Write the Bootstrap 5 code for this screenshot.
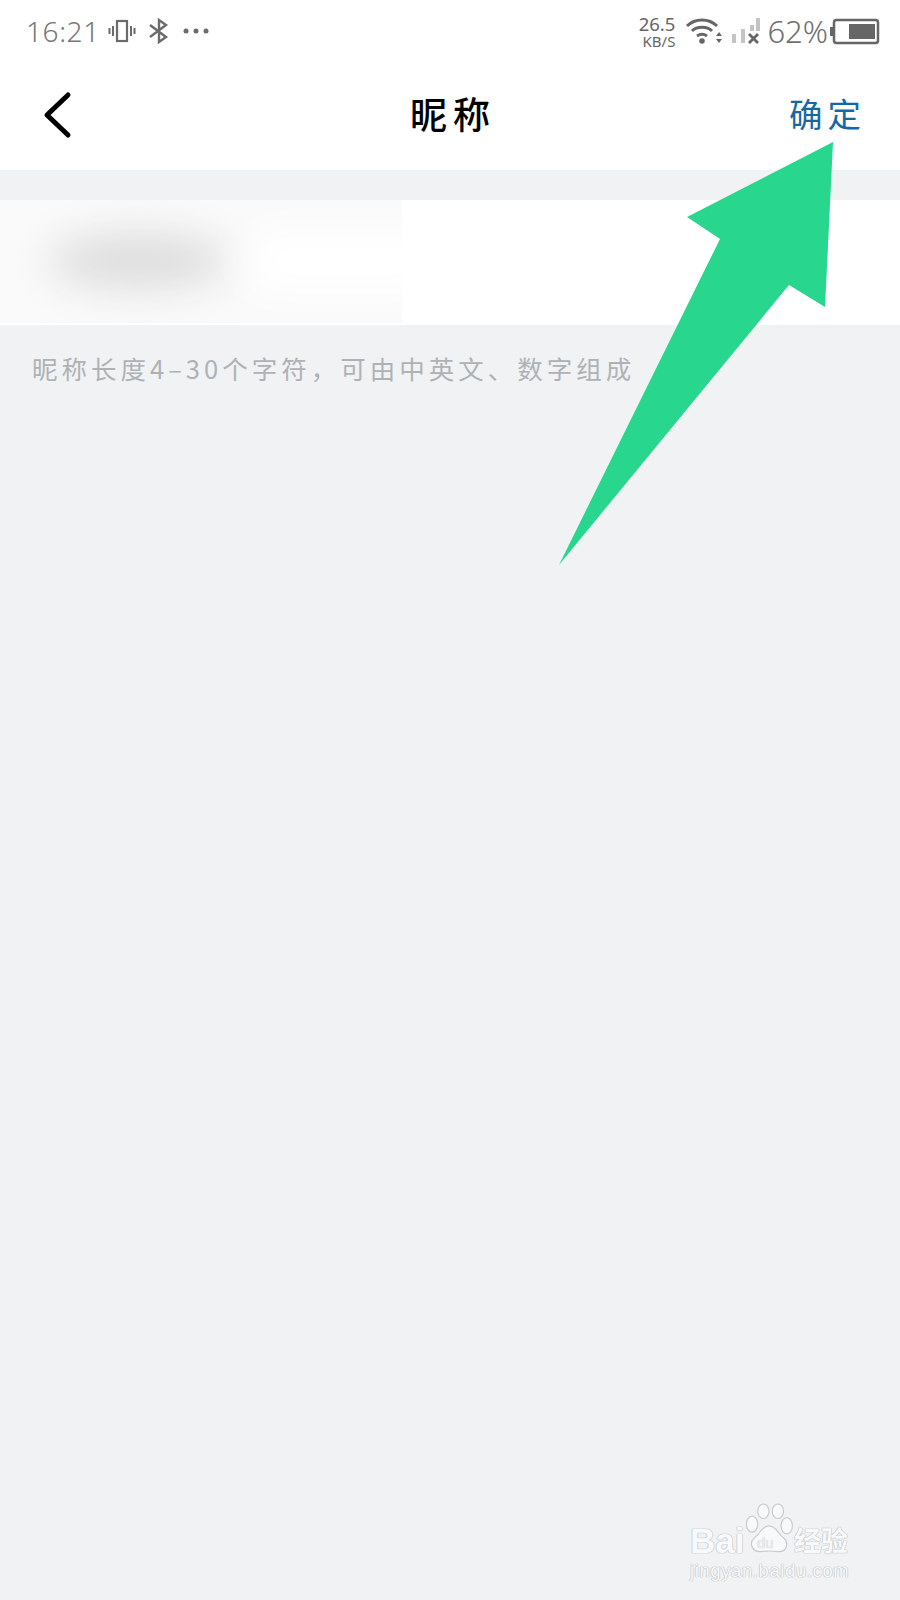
<!DOCTYPE html>
<html lang="zh">
<head>
  <meta charset="UTF-8">
  <title>昵称</title>
  <link href="https://cdn.jsdelivr.net/npm/bootstrap@5.3.0/dist/css/bootstrap.min.css" rel="stylesheet">
  <style>
    body { background: #f0f2f4; font-family: "Liberation Sans", "Noto Sans CJK SC", sans-serif; width: 900px; height: 1600px; overflow: hidden; position: relative; }
    .top-area { background: #fff; height: 170px; }
    .status-row { height: 62px; padding: 0 20px 0 26px; color: #6b6b6b; }
    .status-time { font-family: "Noto Sans", sans-serif; font-size: 28px; font-weight: 300; letter-spacing: .6px; color: #777; line-height: 1; }
    .net-speed { font-family: "Noto Sans", sans-serif; text-align: right; color: #666; margin-right: 6px; }
    .net-speed span { display: block; }
    .speed-num { font-size: 18.5px; line-height: 20px; }
    .speed-unit { font-size: 15px; line-height: 15px; }
    .batt-pct { font-family: "Noto Sans", sans-serif; font-size: 31px; font-weight: 300; color: #6f6f6f; line-height: 1; margin: 0 2px 0 6px; }
    .title-row { height: 108px; padding: 0 34px 0 43px; margin-top: -3px; }
    .back-ico { margin-top: 3px; }
    .page-title { position: absolute; left: 6px; right: 0; top: 90px; text-align: center; font-family: "Noto Sans CJK SC", serif; font-size: 37px; font-weight: 500; letter-spacing: 6px; color: #000; line-height: 46px; }
    .confirm-btn { font-family: "Noto Sans CJK SC", serif; font-size: 33.500px; letter-spacing: 5px; color: #1668a4; line-height: 46px; margin-top: -1px; }
    .name-row { background: #fff; height: 125px; margin-top: 30px; overflow: hidden; }
    .blur-box { width: 402px; height: 123px; background: #fafafa; overflow: hidden; position: relative; }
    .blur-box::before { content: ""; position: absolute; left: 48px; top: 34px; width: 180px; height: 54px; border-radius: 50%; background: #dcdcdc; filter: blur(20px); }
    .blur-box::after { content: ""; position: absolute; left: 250px; top: 28px; width: 190px; height: 66px; background: #fff; filter: blur(20px); }
    .hint-text { font-family: "Noto Sans CJK SC", serif; padding: 23px 0 0 32px; font-size: 25.5px; letter-spacing: 4px; color: #aeb2b6; line-height: 40px; white-space: nowrap; }
    .arrow-mark { position: absolute; left: 0; top: 0; }
    .wm { position: absolute; left: 688px; top: 1500px; width: 190px; height: 90px; color: #f8f9fa; text-shadow: 0 0 1px #b9bdc1, 0 0 1px #b9bdc1, 0 0 1px #b9bdc1; }
    .wm-bai { position: absolute; left: 2px; top: 21px; font-family: "Liberation Sans", sans-serif; font-weight: 700; font-size: 35px; line-height: 40px; }
    .wm-paw { position: absolute; left: 56px; top: 3px; }
    .wm-du { position: absolute; left: 69px; top: 34px; font-size: 15px; line-height: 18px; color: #eceef0; text-shadow: 0 0 1px #b9bdc1; }
    .wm-jy { position: absolute; left: 106px; top: 25px; font-family: "Noto Sans CJK SC", sans-serif; font-weight: 700; font-size: 27px; line-height: 30px; }
    .wm-url { position: absolute; left: 2px; top: 60px; font-size: 18.5px; line-height: 22px; letter-spacing: .6px; white-space: nowrap; }
  </style>
</head>
<body>
<div class="top-area">
  <div class="status-row d-flex align-items-center justify-content-between">
    <div class="d-flex align-items-center gap-2">
      <span class="status-time">16:21</span>
      <svg width="28" height="26" viewBox="0 0 28 26" fill="none" stroke="#6b6b6b" stroke-width="2"><rect x="9" y="3" width="10" height="20" stroke-width="2.2"/><path d="M5 8v10M1.500 10v6M23 8v10M26.500 10v6"/></svg>
      <svg class="ms-1" width="22" height="26" viewBox="0 0 22 26" fill="none" stroke="#6b6b6b" stroke-width="2.400"><path d="M2 7l16 12-7 5V2l7 5L2 19"/></svg>
      <svg class="ms-1" width="28" height="8" viewBox="0 0 28 8" fill="#6b6b6b"><circle cx="4" cy="4" r="2.500"/><circle cx="14" cy="4" r="2.500"/><circle cx="24" cy="4" r="2.500"/></svg>
    </div>
    <div class="d-flex align-items-center">
      <div class="net-speed"><span class="speed-num">26.5</span><span class="speed-unit">KB/S</span></div>
      <svg class="ms-1" width="38" height="28" viewBox="0 0 38 28" fill="none" stroke="#666" stroke-width="3"><path d="M2 9c8-8 22-8 30 0M7 14c5-5 15-5 20 0M12 19c3-2 7-2 10 0"/><circle cx="17" cy="24" r="2.800" fill="#666" stroke="none"/><path d="M34 15l-3 4h6zM34 26l-3-4h6z" fill="#666" stroke="none"/></svg>
      <svg class="ms-2" width="30" height="28" viewBox="0 0 30 28"><g fill="#c4c4c4"><rect x="1" y="17" width="4" height="9"/><rect x="10" y="12" width="4" height="14"/><rect x="19" y="8" width="4" height="6"/><rect x="25" y="1" width="4" height="13"/></g><path d="M18 17l9 9M27 17l-9 9" stroke="#666" stroke-width="2.800"/></svg>
      <span class="batt-pct">62%</span>
      <svg width="50" height="28" viewBox="0 0 50 28"><rect x="0" y="10" width="4" height="9" fill="#666"/><rect x="4" y="3" width="44" height="23" rx="2.500" fill="none" stroke="#666" stroke-width="2.500"/><rect x="19" y="7" width="26" height="15" fill="#666"/></svg>
    </div>
  </div>
  <div class="title-row d-flex align-items-center justify-content-between">
    <svg class="back-ico" width="30" height="48" viewBox="0 0 30 48" fill="none" stroke="#000" stroke-width="5" stroke-linecap="round" stroke-linejoin="round"><path d="M25 4L4 24l21 20"/></svg>
    <span class="confirm-btn">确定</span>
  </div>
</div>
<div class="page-title">昵称</div>
<div class="name-row"><div class="blur-box"></div></div>
<div class="hint-text">昵称长度4–30个字符，可由中英文、数字组成</div>

<svg class="arrow-mark" width="900" height="600"><polygon fill="#29d68d" points="833,142 687,217 720,239 559,565 789,285 825,307"/></svg>

<div class="wm">
  <span class="wm-bai">Bai</span>
  <svg class="wm-paw" width="50" height="52" viewBox="0 0 62 64" fill="#f8f9fa" stroke="#c8cbce" stroke-width="1.500"><ellipse cx="10" cy="26" rx="7" ry="10"/><ellipse cx="24" cy="10" rx="7" ry="9"/><ellipse cx="42" cy="10" rx="7" ry="9"/><ellipse cx="53" cy="28" rx="7" ry="10"/><path d="M31 28c-9 0-11 10-18 15-8 7-2 18 8 17 7-1 13-1 21 0 10 1 15-10 7-17-7-5-9-15-18-15z"/></svg>
  <span class="wm-du">du</span>
  <span class="wm-jy">经验</span>
  <span class="wm-url">jingyan.baidu.com</span>
</div>
<script src="https://cdn.jsdelivr.net/npm/bootstrap@5.3.0/dist/js/bootstrap.bundle.min.js"></script>
</body>
</html>
